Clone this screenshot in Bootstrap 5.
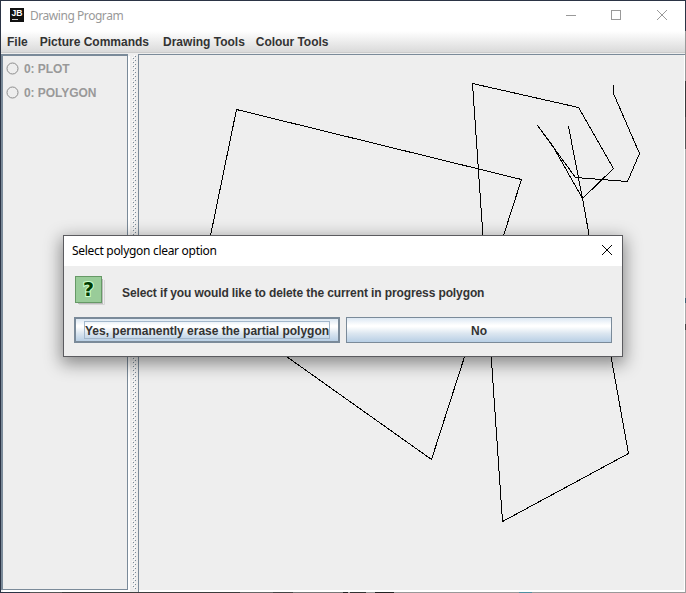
<!DOCTYPE html>
<html lang="en">
<head>
<meta charset="utf-8">
<title>Drawing Program</title>
<link href="https://cdn.jsdelivr.net/npm/bootstrap@5.3.0/dist/css/bootstrap.min.css" rel="stylesheet">
<style>
body{width:686px;height:593px;overflow:hidden;background:#eee;font:bold 12px/16px "Liberation Sans",Arial,sans-serif;color:#333}
.app-window{width:686px;height:593px;border:1px solid #2b3445}
.app-window::before,.app-window::after{content:"";position:absolute}
.app-window::before{left:-1px;right:-1px;bottom:-1px;height:1px;background:linear-gradient(90deg,#2b3445 30px,#555 30px 62px,#3c3c3c 62px 240px,#666 240px 273px,#444 273px 293px,#777 293px 343px,#222 343px 348px,#aaa 348px 350px,#333 350px 366px,#999 366px 375px,#222 375px 394px,#999 394px 519px,#4f8fa0 519px 532px,#999 532px)}
.app-window::after{top:-1px;bottom:-1px;right:-1px;width:1px;background:linear-gradient(#2b3445 31px,#999 31px 81px,#383838 81px 117px,#555 117px 149px,#aaa 149px 298px,#3e6275 298px 303px,#aaa 303px 324px,#444 324px 330px,#a0a0a0 330px)}
.title-bar{height:30px;background:#fff;padding-left:9px;color:#999}
.title-text{font:12px/16px "Noto Sans","Open Sans",sans-serif;letter-spacing:-.3px}
.title-bar .title-text{letter-spacing:-.45px;padding-left:6px}
.app-logo{margin-top:-2px}
.menu-strip{height:23px;background:linear-gradient(#fff,#dadada 21px,#ccc 21px,#ccc 22px,#eee 22px);padding:0 0 1px 6px}
.menu-strip a{color:#333;text-decoration:none}
.menu-picture{margin-left:12px}
.menu-drawing{margin-left:14px}
.menu-colour{margin-left:11px;letter-spacing:-.05px}
.tool-pane{width:127px;border:solid #7a8a99;border-width:2px 1px 1px 2px;box-shadow:2px 2px #fff;margin-bottom:2px;padding:5px 0 0 3px;color:#999}
.tool-pane label{height:16px;margin-bottom:8px;letter-spacing:-.05px}
.tool-pane svg{margin:-2px 5px 0 0}
.split-grip{width:6px;margin:1px 0 2px 4px}
.canvas-pane{border:solid #7a8a99;border-width:1px 0 0 1px;box-shadow:inset -1px -2px #fff}
.dialog-box{left:63px;top:235px;width:560px;height:122px;background:#eee;border:1px solid #5b5b5f;box-shadow:0 5px 16px 2px rgba(0,0,0,.42)}
.dialog-title{height:30px;background:#fff;color:#000;padding:0 9px 0 8px}
.dialog-title svg{margin-top:-2px}
.dialog-message{height:42px;padding:9px 0 0 10px}
.message-text{margin:10px 0 0 16px;letter-spacing:-.107px}
.dialog-actions{padding:9px 10px 0;gap:6px}
.metal-btn{width:266px;height:26px;padding:2px 0 0;border:1px solid #7a8a99;border-radius:0;color:#333;font:inherit;background:linear-gradient(#dde8f3,#fff 30%,#fff 36%,#dbe6f0 65%,#b8cfe5)}
.metal-btn.is-default{border-width:2px;padding:0}
.focus-label{display:block;width:246px;margin:0 auto;height:18px;line-height:18px;border:1px solid #a3b8cc;white-space:nowrap}
</style>
<script src="https://cdn.jsdelivr.net/npm/bootstrap@5.3.0/dist/js/bootstrap.bundle.min.js"></script>
</head>
<body>
<div class="app-window d-flex flex-column position-relative">
  <header class="title-bar d-flex align-items-center">
    <svg class="app-logo" width="14" height="14" viewBox="0 0 14 14"><rect width="14" height="14" fill="#111"/><path d="M2 11.500h6" stroke="#ccc"/><text x="1.500" y="8" font-family="Liberation Sans" font-size="9" font-weight="bold" fill="#fff" textLength="11" lengthAdjust="spacingAndGlyphs">JB</text></svg>
    <span class="title-text flex-grow-1">Drawing Program</span>
    <svg width="120" height="30" viewBox="565 1 120 30" fill="none" stroke="#999" shape-rendering="crispEdges"><path d="M566 15.500h10M611.500 10.500h9v9h-9z"/><path d="M657 10l10 10M667 10l-10 10" shape-rendering="auto"/></svg>
  </header>
  <nav class="menu-strip d-flex align-items-center">
    <a href="#">File</a><a href="#" class="menu-picture">Picture Commands</a><a href="#" class="menu-drawing">Drawing Tools</a><a href="#" class="menu-colour">Colour Tools</a>
  </nav>
  <main class="d-flex flex-grow-1">
    <aside class="tool-pane">
      <label class="d-flex align-items-center"><svg width="13" height="13"><circle cx="6.500" cy="6.500" r="5.500" fill="none" stroke="#8c8c8c"/></svg>0: PLOT</label>
      <label class="d-flex align-items-center"><svg width="13" height="13"><circle cx="6.500" cy="6.500" r="5.500" fill="none" stroke="#8c8c8c"/></svg>0: POLYGON</label>
    </aside>
    <div class="split-grip"><svg class="d-block" width="6" height="534" shape-rendering="crispEdges"><defs><pattern id="bumps" width="6" height="4" patternUnits="userSpaceOnUse"><path d="M0 2h1v1H0zM2 0h1v1H2z" fill="#fff"/><path d="M1 3h1v1H1zM3 1h1v1H3z" fill="#7a8a99"/></pattern></defs><rect width="6" height="534" fill="url(#bumps)"/></svg></div>
    <section class="canvas-pane flex-grow-1">
      <svg class="d-block" width="545" height="535" viewBox="139 55 545 535" fill="none" stroke="#000" shape-rendering="crispEdges"><g transform="translate(.5 .5)"><path d="M236 109L521 179L431 459L198 293.500Z"/><path d="M568 126L582 198L628 453L502 521L472 83L578 107L613 168L582 198L552 145L537 125L575 177L627 181L639 153L613 93V84.500"/></g></svg>
    </section>
  </main>
</div>
<section class="dialog-box position-absolute" role="dialog">
  <div class="dialog-title d-flex align-items-center justify-content-between"><span class="title-text">Select polygon clear option</span><svg width="12" height="12" stroke="#000"><path d="M1 1l10 10M11 1L1 11"/></svg></div>
  <div class="dialog-message d-flex"><svg width="32" height="32"><path d="M4 4h25v25H4z" fill="#bbb"/><path d="M5 29.500h25.500V5" fill="none" stroke="#d6d6d6"/><rect x="1.500" y="1.500" width="26" height="26" fill="#9c9" stroke="#696"/><text x="14.500" y="21" text-anchor="middle" font-family="DejaVu Sans" font-weight="bold" font-size="19" fill="#003c00" stroke="#cfc" stroke-width="2" paint-order="stroke">?</text></svg><span class="message-text">Select if you would like to delete the current in progress polygon</span></div>
  <div class="dialog-actions d-flex"><button class="btn metal-btn is-default"><span class="focus-label">Yes, permanently erase the partial polygon</span></button><button class="btn metal-btn">No</button></div>
</section>
</body>
</html>
